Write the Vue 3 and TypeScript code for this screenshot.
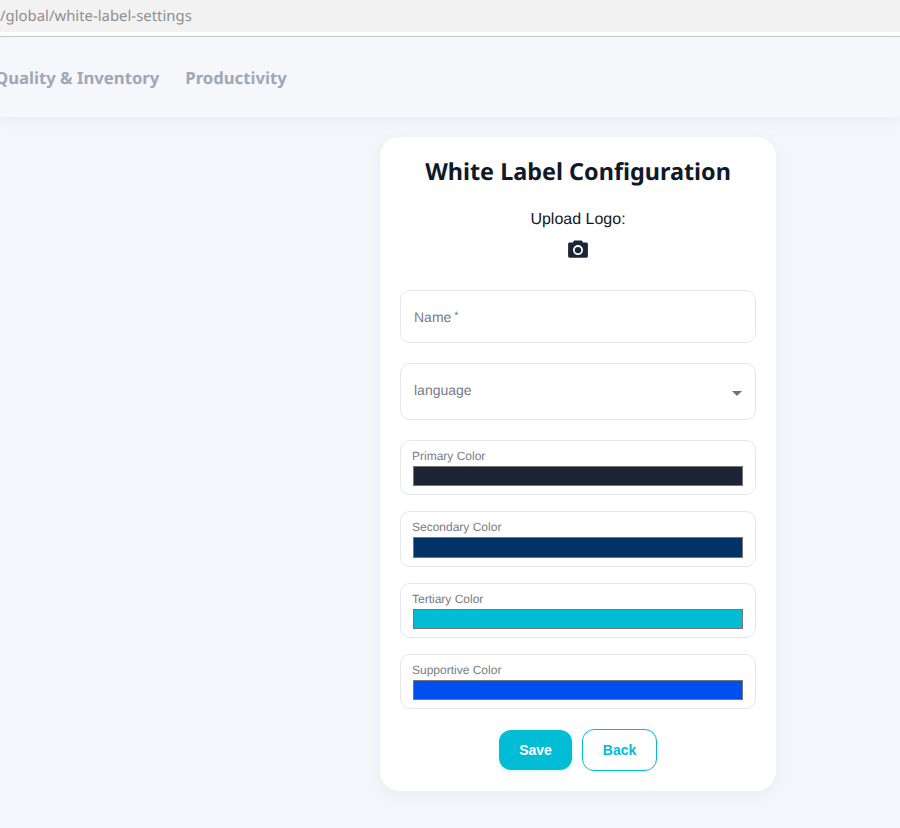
<script setup lang="ts">
interface Swatch { label: string; color: string }
const swatches: Swatch[] = [
  { label: 'Primary Color', color: '#1c2536' },
  { label: 'Secondary Color', color: '#003366' },
  { label: 'Tertiary Color', color: '#00bcd4' },
  { label: 'Supportive Color', color: '#0050ef' },
]
</script>

<template>
  <div class="page">
    <div class="urlbar">/global/white-label-settings</div>
    <div class="urlgap"></div>
    <header class="nav">
      <span class="nav-item first">Quality &amp; Inventory</span>
      <span class="nav-item">Productivity</span>
    </header>
    <main class="main">
      <section class="card">
        <h1 class="title">White Label Configuration</h1>
        <div class="upload">
          <div class="upload-label">Upload Logo:</div>
          <svg class="camera" viewBox="0 0 20 18" width="20" height="18" aria-hidden="true">
            <path fill-rule="evenodd" fill="#1c2536" d="M6.2 0.4h7.6l1.3 2.1h3.2c.9 0 1.6.7 1.6 1.6v12c0 .9-.7 1.6-1.6 1.6H1.7c-.9 0-1.6-.7-1.6-1.6v-12c0-.9.7-1.6 1.6-1.6h3.2zM10 5.1a5 5 0 1 0 0 10 5 5 0 0 0 0-10z" />
            <circle cx="10" cy="10.1" r="3.2" fill="#1c2536" />
          </svg>
        </div>
        <div class="field name-field"><span>Name</span><span class="star">*</span></div>
        <div class="field lang-field">
          <span>language</span>
          <span class="caret"></span>
        </div>
        <div class="colors">
          <div v-for="s in swatches" :key="s.label" class="color-field">
            <div class="color-label">{{ s.label }}</div>
            <div class="swatch" :style="{ backgroundColor: s.color }"></div>
          </div>
        </div>
        <div class="actions">
          <button class="btn save" type="button">Save</button>
          <button class="btn back" type="button">Back</button>
        </div>
      </section>
    </main>
  </div>
</template>

<style scoped>
.page {
  width: 900px;
  height: 828px;
  overflow: hidden;
  background: #f5f6fb;
  font-family: "Liberation Sans", Arial, sans-serif;
  text-rendering: geometricPrecision;
}
.urlbar {
  height: 32px;
  line-height: 32px;
  background: #f2f2f2;
  color: #8f8f8f;
  font-family: "Noto Sans", sans-serif;
  font-size: 14.9px;
  white-space: nowrap;
}
.urlgap {
  height: 4px;
  background: #fff;
  border-bottom: 1px solid #c8c8c8;
}
.nav {
  height: 80px;
  box-sizing: border-box;
  display: flex;
  align-items: center;
  gap: 26px;
  background: #f5f7fb;
  box-shadow: 0 4px 12px rgba(30, 40, 70, 0.05);
  position: relative;
}
.nav-item {
  font-family: "Noto Sans", sans-serif;
  font-weight: 700;
  font-size: 16.7px;
  color: #a0a8b6;
  white-space: nowrap;
}
.first {
  margin-left: -5px;
}
.main {
  display: flex;
  padding: 20px 124px 0 380px;
}
.card {
  width: 396px;
  height: 654px;
  box-sizing: border-box;
  padding: 19px 20px 20px;
  background: #fff;
  border-radius: 20px;
  box-shadow: 0 4px 16px rgba(30, 40, 70, 0.05);
}
.title {
  margin: 0;
  text-align: center;
  font-family: "Noto Sans", sans-serif;
  font-weight: 700;
  font-size: 23.4px;
  line-height: 30px;
  color: #111827;
}
.upload {
  display: flex;
  flex-direction: column;
  align-items: center;
  margin-top: 21px;
  height: 83px;
}
.upload-label {
  font-size: 16px;
  line-height: 26px;
  color: #111827;
}
.camera {
  margin-top: 7px;
  display: block;
}
.field {
  box-sizing: border-box;
  border: 1px solid #e5e7eb;
  border-radius: 10px;
  color: #777c86;
  font-size: 14px;
  display: flex;
  align-items: center;
  padding-left: 13px;
  background: #fff;
}
.name-field {
  height: 53px;
  margin-bottom: 20px;
}
.star {
  margin-left: 3px;
  font-size: 11px;
  position: relative;
  top: -1px;
}
.lang-field {
  height: 57px;
  margin-bottom: 20px;
  justify-content: space-between;
  padding-bottom: 3px;
  padding-right: 13px;
}
.caret {
  width: 0;
  height: 0;
  border-left: 5px solid transparent;
  border-right: 5px solid transparent;
  border-top: 5px solid #6b7280;
  margin-top: 6px;
}
.colors {
  display: flex;
  flex-direction: column;
  gap: 16px;
}
.color-field {
  box-sizing: border-box;
  height: 55.33px;
  border: 1px solid #e5e7eb;
  border-radius: 10px;
  padding: 8px 12px 0 11px;
}
.color-label {
  font-size: 12px;
  line-height: 14px;
  color: #777c86;
}
.swatch {
  box-sizing: border-box;
  height: 20.33px;
  margin: 3px 0 0 1px;
  border: 1px solid #767676;
}
.actions {
  display: flex;
  justify-content: center;
  align-items: center;
  gap: 10px;
  margin-top: 19.67px;
}
.btn {
  box-sizing: border-box;
  font-family: "Liberation Sans", Arial, sans-serif;
  font-weight: 700;
  font-size: 14px;
  border-radius: 12px;
  cursor: pointer;
}
.save {
  width: 73px;
  height: 40px;
  border: none;
  background: #00bcd4;
  color: #fff;
  box-shadow: 0 2px 6px rgba(0, 188, 212, 0.12);
}
.back {
  width: 75px;
  height: 42px;
  border: 1px solid #00bcd4;
  background: #fff;
  color: #00bcd4;
}
</style>
